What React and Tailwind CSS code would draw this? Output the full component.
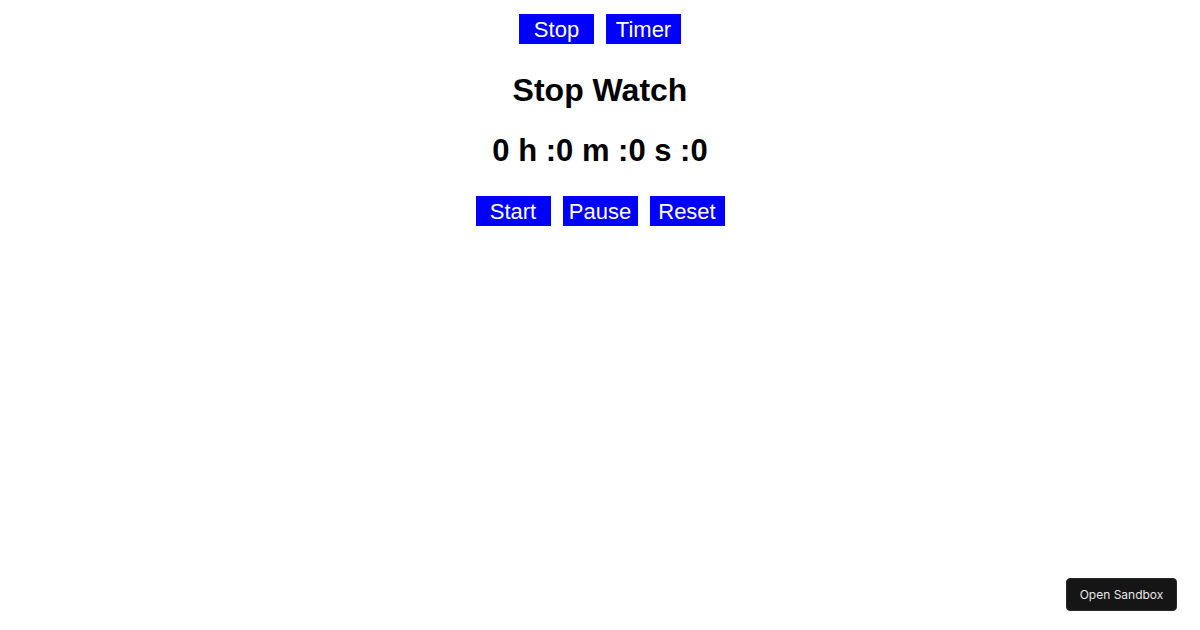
import React from "react";

function Btn({ children }) {
  return (
    <button className="w-[75px] h-[30px] bg-[#0000ff] text-white text-[22px] leading-[30px] pt-[1px] text-center">
      {children}
    </button>
  );
}

export default function App() {
  return (
    <div className="min-h-[630px] w-full bg-white relative" style={{ fontFamily: '"Liberation Sans", Arial, sans-serif' }}>
      <div className="flex flex-col items-center pt-[14px]">
        <div className="flex gap-[12px]">
          <Btn>Stop</Btn>
          <Btn>Timer</Btn>
        </div>
        <h1 className="mt-[28px] text-[32px] leading-[37px] font-bold text-black">Stop Watch</h1>
        <h2 className="mt-[24px] text-[31px] leading-[36px] font-bold text-black">0 h :0 m :0 s :0</h2>
        <div className="flex gap-[12px] mt-[27px]">
          <Btn>Start</Btn>
          <Btn>Pause</Btn>
          <Btn>Reset</Btn>
        </div>
      </div>
      <div className="fixed right-[23px] bottom-[19px] w-[111px] h-[33px] rounded-[4px] bg-[#151515] border border-[#2a2a2a] text-[#e8e8e8] text-[12px] flex items-center justify-center" style={{ fontFamily: 'Inter, "Liberation Sans", sans-serif' }}>
        Open Sandbox
      </div>
    </div>
  );
}
